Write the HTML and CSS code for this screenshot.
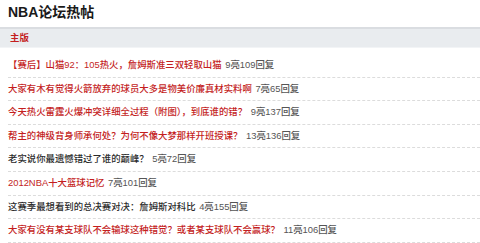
FILE: index.html
```html
<!DOCTYPE html>
<html lang="zh-CN">
<head>
  <meta charset="UTF-8">
  <meta name="viewport" content="width=device-width, initial-scale=1.0">
  <title>NBA论坛热帖</title>
  <link rel="stylesheet" href="styles.css">
</head>
<body>

  <div id="hot-posts">
    <h1 class="page-title">NBA论坛热帖</h1>

    <!-- Board header -->
    <div class="board-bar">
      <span class="board-name">主版</span>
    </div>

    <!-- Post list -->
    <ul class="post-list">
      <li class="post"><a class="post-link hot" href="#">【赛后】山猫92：105热火，詹姆斯准三双轻取山猫</a> <span class="meta">9亮109回复</span></li>
      <li class="post"><a class="post-link hot" href="#">大家有木有觉得火箭放弃的球员大多是物美价廉真材实料啊</a> <span class="meta">7亮65回复</span></li>
      <li class="post"><a class="post-link hot" href="#">今天热火雷霆火爆冲突详细全过程（附图），到底谁的错？</a> <span class="meta">9亮137回复</span></li>
      <li class="post"><a class="post-link hot" href="#">帮主的神级背身师承何处？为何不像大梦那样开班授课？</a> <span class="meta">13亮136回复</span></li>
      <li class="post"><a class="post-link" href="#">老实说你最遗憾错过了谁的巅峰？</a> <span class="meta">5亮72回复</span></li>
      <li class="post"><a class="post-link hot" href="#">2012NBA十大篮球记忆</a> <span class="meta">7亮101回复</span></li>
      <li class="post"><a class="post-link" href="#">这赛季最想看到的总决赛对决：詹姆斯对科比</a> <span class="meta">4亮155回复</span></li>
      <li class="post"><a class="post-link hot" href="#">大家有没有某支球队不会输球这种错觉？或者某支球队不会赢球？</a> <span class="meta">11亮106回复</span></li>
    </ul>
  </div>

</body>
</html>
```

FILE: styles.css
```css
/* ====== RESET ====== */
html, body {
  margin: 0;
  padding: 0;
}

body {
  background: #fff;
  color: #333;
  font-family: "Liberation Sans", "Noto Sans CJK SC", sans-serif;
  font-size: 9.4px;
}

/* ====== TITLE ====== */
.page-title {
  margin: 0 0 3px;
  padding: 0 8px;
  font-size: 14px;
  line-height: 24px;
  font-weight: bold;
  color: #1a1a1a;
}

/* ====== BOARD BAR ====== */
.board-bar {
  background: #e9ecef;
  border-top: 2px solid #dadde1;
  border-bottom: 1px solid #f2f4f6;
  height: 18px;
  line-height: 18px;
  padding: 0 10px;
}

.board-name {
  color: #c41e1e;
  font-weight: bold;
}

/* ====== POSTS ====== */
.post-list {
  list-style: none;
  margin: 6px 0 0 8px;
  padding: 0;
}

.post {
  line-height: 22.6px;
  border-bottom: 1px dashed #dcdcdc;
  white-space: nowrap;
  font-weight: 500;
}

.post-link {
  color: #2b2b2b;
  text-decoration: none;
}

.post-link.hot {
  color: #c41e1e;
}

.meta {
  color: #555;
  margin-left: 1px;
}
```
